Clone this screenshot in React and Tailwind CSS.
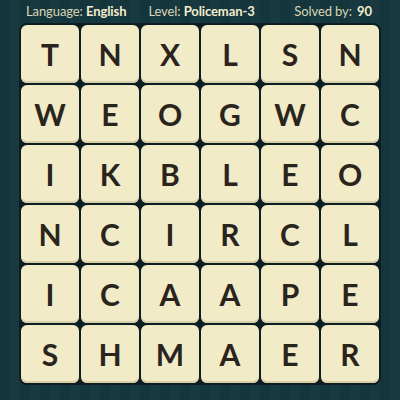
import React from "react";

const rows = ["TNXLSN", "WEOGWC", "IKBLEO", "NCIRCL", "ICAAPE", "SHMAER"];

export default function App() {
  return (
    <div
      className="w-[400px] h-[400px] overflow-hidden bg-[repeating-linear-gradient(90deg,#14353b_0px,#14353b_10px,#17393f_10px,#17393f_20px)]"
      style={{ fontFamily: "Lato, 'Open Sans', sans-serif" }}
    >
      {/* header */}
      <div className="h-[23px] flex items-center text-[13px] text-[#d9d5b6] pt-[1px] tracking-[-0.1px]">
        <div className="ml-[26px]">
          Language: <span className="font-bold text-[#f3edd0]">English</span>
        </div>
        <div className="ml-[22px]">
          Level: <span className="font-bold text-[#f3edd0]">Policeman-3</span>
        </div>
        <div className="ml-auto mr-[28px]">
          Solved by: <span className="font-bold text-[#f3edd0] ml-[2px]">90</span>
        </div>
      </div>

      {/* board */}
      <div className="ml-[19px] w-[362px] p-[2px] bg-[#0c1e22] rounded-[8px] grid grid-cols-6 gap-[2px]">
        {rows.join("").split("").map((ch, i) => (
          <div
            key={i}
            className="h-[58px] rounded-[6px] bg-[#f2ebc8] shadow-[inset_0_-2px_0_#d9cfa6] flex items-center justify-center text-[30px] font-bold text-[#2a241d]"
          >
            {ch}
          </div>
        ))}
      </div>
    </div>
  );
}
